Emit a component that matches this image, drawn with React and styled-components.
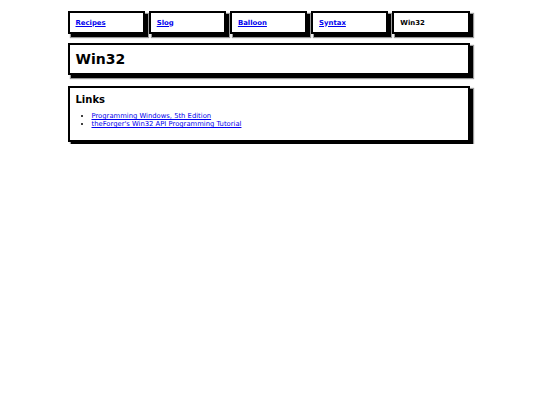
import React from "react";
import styled, { createGlobalStyle } from "styled-components";

const GlobalStyle = createGlobalStyle`
  html, body {
    margin: 0;
    padding: 0;
    background: #fff;
  }
  body {
    font-family: "DejaVu Sans", "Liberation Sans", sans-serif;
    color: #000;
  }
`;

const Page = styled.div`
  width: 75%;
  margin: 0 auto;
  padding-top: 11px;
  display: flex;
  flex-direction: column;
  gap: 9px;
`;

const Nav = styled.nav`
  display: flex;
  gap: 4px;
  padding-right: 3px;
`;

const Tab = styled.div`
  flex: 1;
  height: 23px;
  box-sizing: border-box;
  border: 2px solid #000;
  box-shadow: 3px 3px 0 #000, 3px 3px 1px 1px #999;
  padding: 0 6px;
  display: flex;
  align-items: center;
  font-size: 6.9px;
  font-weight: bold;

  a {
    color: #0000ee;
  }
`;

const Box = styled.section`
  box-sizing: border-box;
  border: 2px solid #000;
  box-shadow: 3px 3px 0 #000, 3px 3px 1px 1px #999;
  padding: ${(p) => p.$pad};
  margin-right: 3px;
  margin-bottom: 2px;
`;

const Title = styled.h1`
  margin: 0;
  font-size: 14px;
  line-height: 28px;
  font-weight: bold;
`;

const SubTitle = styled.h2`
  margin: 0 0 5px;
  font-size: 10px;
  line-height: 14px;
  font-weight: bold;
`;

const List = styled.ul`
  margin: 0;
  padding-left: 16px;
  font-size: 6.8px;
  line-height: 8px;

  a {
    color: #0000ee;
  }
`;

const tabs = [
  { label: "Recipes", link: true },
  { label: "Slog", link: true },
  { label: "Balloon", link: true },
  { label: "Syntax", link: true },
  { label: "Win32", link: false },
];

const App = () => {
  return (
    <>
      <GlobalStyle />
      <Page>
        <Nav>
          {tabs.map((t) => (
            <Tab key={t.label}>
              {t.link ? <a href="#">{t.label}</a> : t.label}
            </Tab>
          ))}
        </Nav>
        <Box $pad="0 6px">
          <Title>Win32</Title>
        </Box>
        <Box $pad="5px 6px 12px">
          <SubTitle>Links</SubTitle>
          <List>
            <li>
              <a href="#">Programming Windows, 5th Edition</a>
            </li>
            <li>
              <a href="#">theForger's Win32 API Programming Tutorial</a>
            </li>
          </List>
        </Box>
      </Page>
    </>
  );
};

export default App;
